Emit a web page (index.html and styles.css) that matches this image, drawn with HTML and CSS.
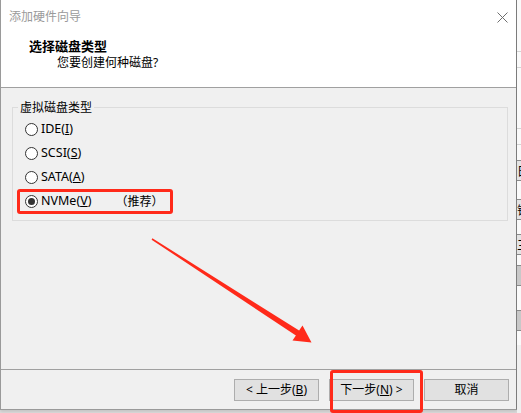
FILE: index.html
```html
<!DOCTYPE html>
<html lang="zh-CN">
<head>
<meta charset="utf-8">
<title>添加硬件向导</title>
<link rel="stylesheet" href="styles.css">
</head>
<body>
<div class="screen">
  <div class="dialog">
    <header class="header">
      <div class="titlebar">
        <span class="title">添加硬件向导</span>
        <svg class="close" width="11" height="11" viewBox="0 0 11 11"><path d="M0.5 0.5L10.5 10.5M10.5 0.5L0.5 10.5" stroke="#6e6e6e" stroke-width="1"/></svg>
      </div>
      <div class="heading">选择磁盘类型</div>
      <div class="subheading">您要创建何种磁盘?</div>
    </header>
    <main class="content">
      <fieldset class="group">
        <legend>虚拟磁盘类型</legend>
        <div class="option"><span class="radio"></span><span class="label">IDE(<u>I</u>)</span></div>
        <div class="option"><span class="radio"></span><span class="label">SCSI(<u>S</u>)</span></div>
        <div class="option"><span class="radio"></span><span class="label">SATA(<u>A</u>)</span></div>
        <div class="option"><span class="radio checked"></span><span class="label">NVMe(<u>V</u>)</span><span class="note">（推荐）</span><span class="callout callout-option"></span></div>
      </fieldset>
    </main>
    <footer class="footer">
      <button class="btn">&lt; 上一步(<u>B</u>)</button>
      <button class="btn">下一步(<u>N</u>) &gt;<span class="callout callout-next"></span></button>
      <button class="btn">取消</button>
    </footer>
  </div>
  <div class="backdrop">
    <div class="bd-space" style="height:51px"></div>
    <div class="bd-line"></div>
    <div class="bd-space" style="height:15px"></div>
    <div class="bd-line"></div>
    <div class="bd-space" style="height:60px"></div>
    <div class="bd-line"></div>
    <div class="bd-space" style="height:15px"></div>
    <div class="bd-line"></div>
    <div class="bd-space" style="height:15px"></div>
    <div class="bd-cell">日</div>
    <div class="bd-space" style="height:18px"></div>
    <div class="bd-cell">销</div>
    <div class="bd-space" style="height:14px"></div>
    <div class="bd-cell">三</div>
    <div class="bd-space" style="height:10px"></div>
    <div class="bd-cell bd-dark"></div>
    <div class="bd-space" style="height:24px"></div>
    <div class="bd-cell bd-dark"></div>
    <div class="bd-fill"></div>
  </div>
</div>
<svg class="arrow" width="521" height="413" viewBox="0 0 521 413">
  <polygon points="152.4,238.3 299.1,330.5 302.5,325.5 311.5,342.5 292.5,340.5 295.9,335.5 151.6,239.7" fill="#ff2a1a"/>
</svg>
</body>
</html>
```

FILE: styles.css
```css
html, body {
  margin: 0;
  padding: 0;
}

body {
  width: 521px;
  height: 413px;
  overflow: hidden;
  position: relative;
  background: #dedede;
  font-family: "Noto Sans", "Noto Sans CJK SC", sans-serif;
  font-size: 12px;
  color: #000;
}

.screen {
  display: flex;
  height: 413px;
}

.dialog {
  width: 515px;
  height: 409px;
  flex: none;
  display: flex;
  flex-direction: column;
  background: #f0f0f0;
  border-left: 1px solid #9a9a9a;
  border-right: 1px solid #7c7c7c;
  border-bottom: 1px solid #9a9a9a;
  box-shadow: 0 2px 3px rgba(0, 0, 0, 0.12);
}

.header {
  height: 87px;
  flex: none;
  background: #fff;
  border-bottom: 1px solid #a0a0a0;
  box-sizing: content-box;
  padding: 0;
}

.titlebar {
  display: flex;
  align-items: center;
  justify-content: space-between;
  height: 16px;
  padding: 8px 8px 0 8px;
  line-height: 16px;
}

.title {
  color: #9a9a9a;
  font-family: "Noto Sans CJK SC", sans-serif;
}

.close {
  display: block;
  margin-top: 3px;
}

.heading {
  margin: 14px 0 0 28px;
  line-height: 16px;
  font-size: 13px;
  font-weight: bold;
  font-family: "Noto Sans CJK SC", sans-serif;
}

.subheading {
  margin: 1px 0 0 56px;
  line-height: 16px;
}

.content {
  height: 281px;
  flex: none;
  box-sizing: border-box;
  padding: 11px 8px 0 11px;
}

.group {
  margin: 0;
  padding: 2px 0 7px 0;
  border: 1px solid #dcdcdc;
  min-width: 0;
}

.group legend {
  margin-left: 5px;
  padding: 0 2px;
  line-height: 16px;
  font-family: "Noto Sans CJK SC", sans-serif;
}

.option {
  position: relative;
  display: flex;
  align-items: center;
  height: 24px;
  margin-left: 12px;
  line-height: 16px;
}

.label {
  font-size: 12.5px;
}

.radio {
  width: 13px;
  height: 13px;
  box-sizing: border-box;
  border: 1px solid #333;
  border-radius: 50%;
  background: #fff;
  margin-right: 3px;
  position: relative;
  flex: none;
}

.radio.checked::after {
  content: "";
  position: absolute;
  left: 2px;
  top: 2px;
  width: 7px;
  height: 7px;
  border-radius: 50%;
  background: #333;
}

.note {
  margin-left: 24px;
  font-family: "Noto Sans CJK SC", sans-serif;
}

.callout {
  position: absolute;
  box-sizing: border-box;
  border: 3px solid #ff2a1a;
  border-radius: 3px;
  pointer-events: none;
}

.callout-option {
  left: -8px;
  top: 0;
  width: 156px;
  height: 25px;
}

.callout-next {
  left: 0;
  top: -10px;
  width: 93px;
  height: 43px;
}

.footer {
  height: 40px;
  flex: none;
  box-sizing: border-box;
  border-top: 1px solid #a0a0a0;
  display: flex;
  justify-content: flex-end;
  align-items: flex-start;
  gap: 10px;
  padding: 9px 7px 0 0;
}

.btn {
  position: relative;
  width: 85px;
  height: 22px;
  box-sizing: border-box;
  padding: 0;
  border: 1px solid #adadad;
  background: #e1e1e1;
  font-family: "Noto Sans", "Noto Sans CJK SC", sans-serif;
  font-size: 12px;
  line-height: 18px;
  color: #000;
}

.backdrop {
  flex: 1;
  display: flex;
  flex-direction: column;
  background: #fafafa;
  overflow: hidden;
}

.bd-space {
  flex: none;
}

.bd-line {
  height: 1px;
  flex: none;
  background: #d4d4d4;
}

.bd-cell {
  height: 19px;
  flex: none;
  border-top: 1px solid #8a8a8a;
  border-bottom: 1px solid #8a8a8a;
  background: #e4e4e4;
  line-height: 19px;
  font-family: "Noto Sans CJK SC", sans-serif;
  white-space: nowrap;
}

.bd-dark {
  background: #c8c8c8;
}

.bd-fill {
  flex: 1;
  background: #f0f0f0;
  margin-top: 14px;
}

.arrow {
  position: absolute;
  left: 0;
  top: 0;
  pointer-events: none;
}
```
